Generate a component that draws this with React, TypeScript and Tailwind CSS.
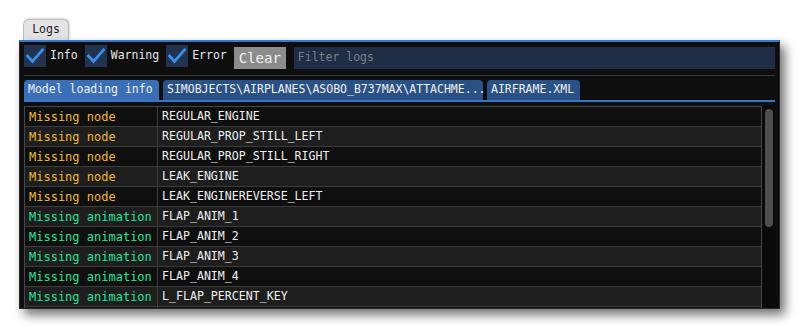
import React from 'react';

type Row = { kind: 'node' | 'anim' | 'none'; name: string };

const ROWS: Row[] = [
  { kind: 'node', name: 'REGULAR_ENGINE' },
  { kind: 'node', name: 'REGULAR_PROP_STILL_LEFT' },
  { kind: 'node', name: 'REGULAR_PROP_STILL_RIGHT' },
  { kind: 'node', name: 'LEAK_ENGINE' },
  { kind: 'node', name: 'LEAK_ENGINEREVERSE_LEFT' },
  { kind: 'anim', name: 'FLAP_ANIM_1' },
  { kind: 'anim', name: 'FLAP_ANIM_2' },
  { kind: 'anim', name: 'FLAP_ANIM_3' },
  { kind: 'anim', name: 'FLAP_ANIM_4' },
  { kind: 'anim', name: 'L_FLAP_PERCENT_KEY' },
  // ligne coupée par le bas de la fenêtre
  { kind: 'none', name: '' },
];

const MONO = "font-['DejaVu_Sans_Mono',monospace]";

function Check({ label }: { label: string }) {
  return (
    <div className="flex items-center gap-[4px]">
      <div className="flex h-[22px] w-[22px] items-center justify-center bg-[#22324f]">
        <svg width="22" height="22" viewBox="0 0 22 22" fill="none">
          <path d="M3.5 11 L8.5 16.5 L18.5 5" stroke="#3b8fea" strokeWidth="2.8" strokeLinecap="square" />
        </svg>
      </div>
      <span className="text-[11.5px] text-[#e8e8e8]">{label}</span>
    </div>
  );
}

export default function App() {
  return (
    <div className={`min-h-[329px] w-[800px] bg-white pt-[19px] ${MONO}`}>
      {/* onglet de fenêtre */}
      <div className="ml-[23px] flex h-[21px] w-[46px] items-center justify-center rounded-t-[6px] border border-b-0 border-[#bdbdbd] bg-[#e4e4e4] text-[11.5px] text-[#1a1a1a] shadow-[1px_-1px_2px_rgba(0,0,0,0.15)]">
        Logs
      </div>

      <div className="ml-[19px] flex h-[269px] w-[761px] flex-col overflow-hidden border border-[#2a2a2a] border-t-2 border-t-[#3a78c9] bg-[#0e0e0e] px-[4px] pt-[3px] shadow-[5px_6px_10px_rgba(0,0,0,0.55)]">
        {/* barre d'outils */}
        <div className="flex h-[24px] items-start">
          <div className="flex gap-[7px]">
            <Check label="Info" />
            <Check label="Warning" />
            <Check label="Error" />
          </div>
          <button className="ml-[7px] mt-[2px] flex h-[22px] w-[52px] items-center justify-center bg-[#8c8c8c] text-[14px] text-[#f2f2f2]">
            Clear
          </button>
          <div className="ml-[8px] mt-[2px] flex h-[22px] flex-1 items-center bg-[#1f2d46] px-[4px] text-[11.5px] text-[#7b7f86]">
            Filter logs
          </div>
        </div>

        <div className="mt-[6px] h-px bg-[#3a3a3a]" />

        {/* onglets */}
        <div className="mt-[4px] flex gap-[4px] text-[11.5px] text-[#f0f0f0]">
          <div className="flex h-[20px] w-[135px] items-center rounded-t-[4px] bg-[#3a6fb5] pl-[4px]">Model loading info</div>
          <div className="flex h-[20px] w-[320px] items-center rounded-t-[4px] bg-[#2a5185] pl-[4px] whitespace-nowrap">
            SIMOBJECTS\AIRPLANES\ASOBO_B737MAX\ATTACHME...
          </div>
          <div className="flex h-[20px] w-[93px] items-center rounded-t-[4px] bg-[#2a5185] pl-[4px]">AIRFRAME.XML</div>
        </div>
        <div className="h-[2px] bg-[#3a74c2]" />

        {/* tableau + défilement */}
        <div className="mt-[4px] flex min-h-0 flex-1">
          <div className="flex-1 border-t border-l border-r border-[#474747]">
            {ROWS.map((r, i) => (
              <div
                key={i}
                className={`flex h-[20px] border-b border-[#3c3c3c] ${i % 2 === 0 ? 'bg-[#0f0f0f]' : 'bg-[#1e1e1e]'}`}
              >
                <div
                  className={`flex w-[133px] shrink-0 items-center border-r border-[#3c3c3c] pl-[4px] text-[12px] ${
                    r.kind === 'node' ? 'text-[#f4b92f]' : 'text-[#22e69a]'
                  }`}
                >
                  {r.kind === 'node' ? 'Missing node' : r.kind === 'anim' ? 'Missing animation' : ''}
                </div>
                <div className="flex items-center pl-[4px] text-[11.6px] text-[#f0f0f0]">{r.name}</div>
              </div>
            ))}
          </div>
          <div className="w-[13px] bg-[#0a0a0a] pl-[3px] pt-[3px]">
            <div className="h-[118px] w-[8px] rounded-[4px] bg-[#4e4e4e]" />
          </div>
        </div>
      </div>
    </div>
  );
}
